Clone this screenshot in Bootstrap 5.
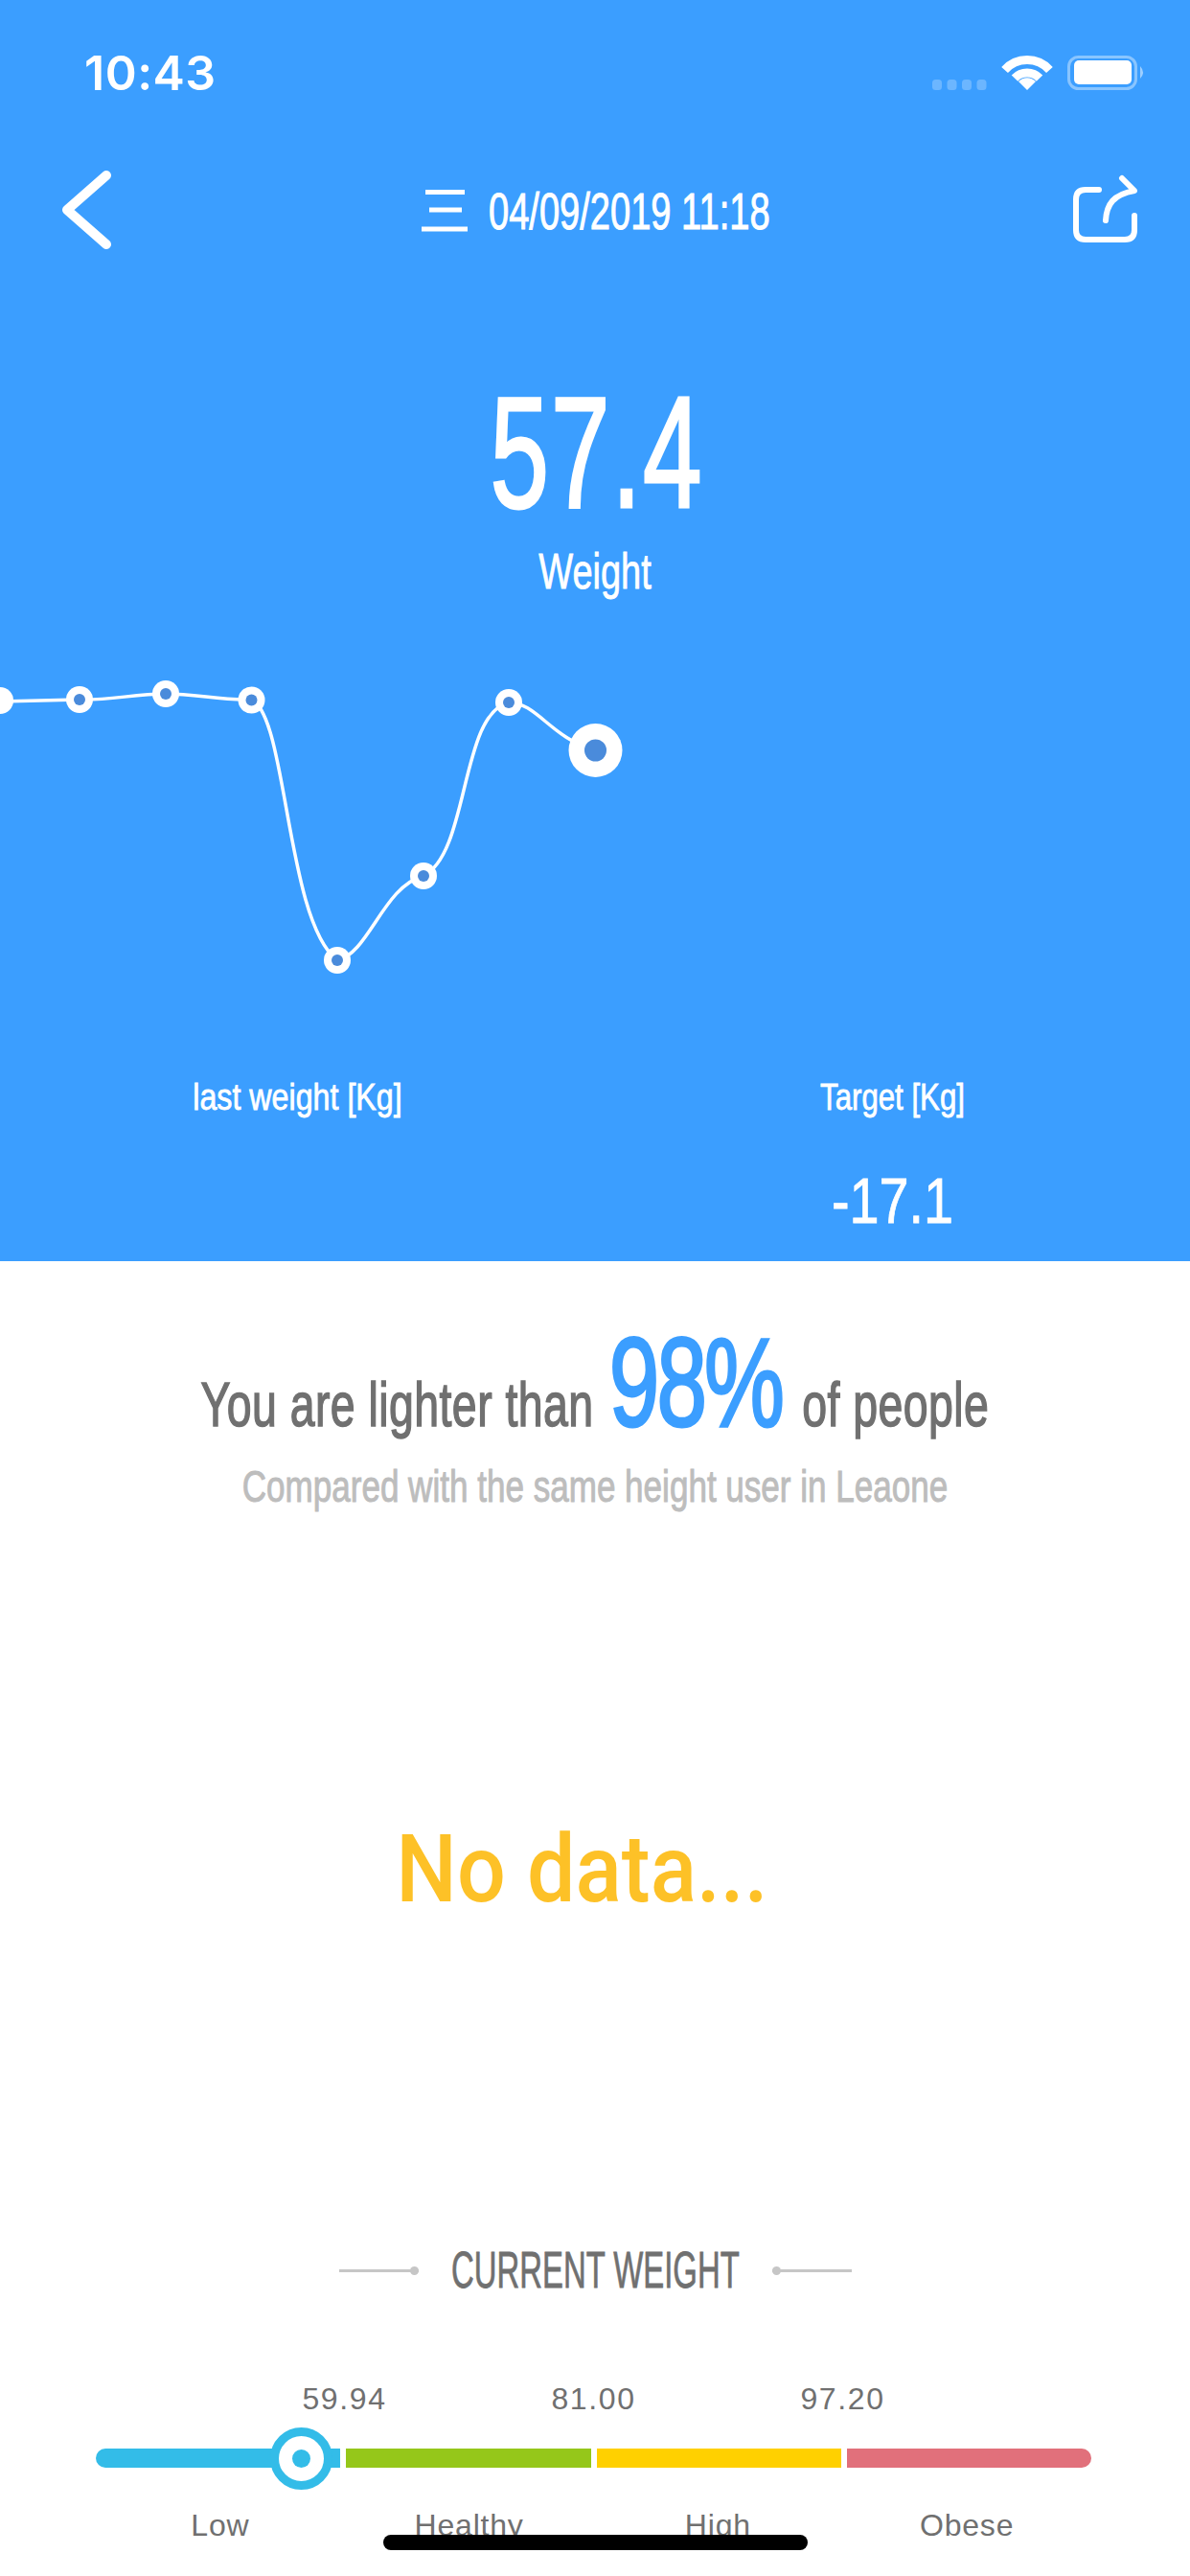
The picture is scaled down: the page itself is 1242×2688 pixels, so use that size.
<!DOCTYPE html>
<html>
<head>
  <meta charset="utf-8">
  <title>Weight</title>
  <link href="https://cdn.jsdelivr.net/npm/bootstrap@5.3.3/dist/css/bootstrap.min.css" rel="stylesheet">
  <style>
    :root { --blue: #3b9eff; --grey: #707070; }
    body { width: 1242px; height: 2688px; overflow: hidden; background: #fff; font-family: "Liberation Sans", sans-serif; }
    .din { display: block; text-align: center; white-space: nowrap; font-family: "Liberation Sans Narrow", "Liberation Sans", sans-serif; }
    .screen { position: relative; width: 1242px; height: 2688px; }
    .top-panel { height: 1316px; background: var(--blue); color: #fff; }
    .status-row { height: 150px; padding: 58px 46px 0 88px; }
    .clock { font-family: Inter, "Liberation Sans", sans-serif; font-size: 50px; font-weight: 600; letter-spacing: .5px; line-height: 36px; }
    .title-row { height: 140px; padding: 0 53px 0 64px; }
    .date-group { gap: 22px; }
    .date-text { width: 292px; font-size: 54px; line-height: 60px; text-align: left; transform: scaleX(.705); transform-origin: left center; -webkit-text-stroke: 1px #fff; }
    .big-num { font-size: 165px; line-height: 150px; margin: 107px 0 0 4px; transform: scaleX(.67); letter-spacing: 3px; -webkit-text-stroke: 3px #fff; }
    .big-cap { font-size: 52px; line-height: 60px; transform: scaleX(.73); margin-top: 19px; -webkit-text-stroke: .8px #fff; }
    .trend { display: block; margin-top: 74px; }
    .sub-cols { margin-top: 90px; }
    .sub-label { font-size: 39px; line-height: 46px; transform: scaleX(.8); -webkit-text-stroke: .8px #fff; }
    .sub-label.wide-label { transform: scaleX(.826); }
    .sub-val { font-size: 66px; line-height: 70px; margin-top: 50px; transform: scaleX(.845); -webkit-text-stroke: .8px #fff; }
    .compare-line { margin-top: 65px; color: var(--grey); font-size: 65px; letter-spacing: .6px; line-height: 124px; transform: scaleX(.715); -webkit-text-stroke: 1.5px var(--grey); }
    .compare-line b { font-weight: 400; font-size: 132px; letter-spacing: -4px; color: var(--blue); margin: 0 11px 0 4px; -webkit-text-stroke: 3px var(--blue); }
    .compare-sub { color: #bdbdbd; font-size: 46px; line-height: 54px; margin-top: -4px; transform: scaleX(.762); -webkit-text-stroke: 1px #bdbdbd; }
    .no-data { color: #fdc127; font-family: Roboto, "Liberation Sans", sans-serif; font-size: 99px; font-weight: 500; line-height: 110px; margin-top: 317px; margin-right: 27px; transform: scaleX(.905); }
    .cur-title { margin-top: 334px; height: 60px; }
    .cur-box { width: 369px; }
    .cur-box span { color: var(--grey); font-size: 53px; line-height: 60px; transform: scaleX(.62); -webkit-text-stroke: .8px var(--grey); }
    .dash { width: 83px; height: 3px; background: #c6c6c6; position: relative; }
    .dash::after { content: ""; position: absolute; top: -3px; width: 9px; height: 9px; border-radius: 50%; background: #c6c6c6; }
    .dash.lft::after { right: 0; }
    .dash.rgt::after { left: 0; }
    .scale-box { position: relative; margin: 84px 103px 0 100px; height: 190px; }
    .scale-vals { height: 40px; color: var(--grey); font-size: 32px; letter-spacing: 1.6px; line-height: 40px; }
    .scale-vals div { width: 260px; text-align: center; }
    .scale-bar { height: 20px; gap: 6px; margin-top: 32px; }
    .scale-bar div { flex: 1 1 0; }
    .seg-a { background: #33bce8; border-radius: 10px 0 0 10px; }
    .seg-b { background: #95c71a; }
    .seg-c { background: #ffd000; }
    .seg-d { background: #e1707b; border-radius: 0 10px 10px 0; }
    .thumb { position: absolute; left: 182px; top: 50px; width: 65px; height: 65px; border-radius: 50%; background: #fff; border: 9px solid #33bce8; }
    .thumb::after { content: ""; position: absolute; left: 14px; top: 14px; width: 19px; height: 19px; border-radius: 50%; background: #33bce8; }
    .scale-names { margin-top: 40px; color: var(--grey); font-size: 32px; line-height: 40px; }
    .scale-names div { flex: 1 1 0; text-align: center; letter-spacing: .8px; }
    .home-bar { position: absolute; left: 400px; top: 2645px; width: 443px; height: 16px; border-radius: 8px; background: #000; }
  </style>
</head>
<body>
  <div class="screen">
    <div class="top-panel">
      <div class="status-row d-flex justify-content-between align-items-start">
        <div class="clock">10:43</div>
        <svg width="223" height="37" viewBox="0 0 223 37">
          <g fill="#fff" fill-opacity=".25">
            <rect x="0" y="25" width="10" height="11" rx="3.500"/><rect x="15.500" y="25" width="10" height="11" rx="3.500"/><rect x="31" y="25" width="10" height="11" rx="3.500"/><rect x="46.500" y="25" width="10" height="11" rx="3.500"/>
          </g>
          <path d="M75.600 15A31.500 31.500 0 0 1 122.400 15M86 23.600A18 18 0 0 1 112 23.600" fill="none" stroke="#fff" stroke-width="9"/>
          <path d="M99 36L90 27A12.500 12.500 0 0 1 108 27Z" fill="#fff"/>
          <rect x="142.500" y="1.500" width="70" height="33" rx="10" fill="none" stroke="#fff" stroke-opacity=".4" stroke-width="3"/>
          <rect x="148" y="5" width="60" height="25" rx="5" fill="#fff"/>
          <path d="M217 11Q223 17.500 217 24Z" fill="#fff" fill-opacity=".5"/>
        </svg>
      </div>
      <div class="title-row d-flex justify-content-between align-items-center">
        <svg width="60" height="90" viewBox="0 0 60 90">
          <path d="M47 8L6 44L47 80" fill="none" stroke="#fff" stroke-width="10" stroke-linecap="round" stroke-linejoin="round"/>
        </svg>
        <div class="date-group d-flex align-items-center">
          <svg width="48" height="44" viewBox="0 0 48 44">
            <path d="M4 2.500H45M8 21H42M0 41H48" stroke="#fff" stroke-width="5"/>
          </svg>
          <div class="date-text din">04/09/2019 11:18</div>
        </div>
        <svg width="72" height="76" viewBox="0 0 72 76">
          <path d="M30 16H16Q6 16 6 26V58Q6 68 16 68H57Q67 68 67 58V43" fill="none" stroke="#fff" stroke-width="6" stroke-linecap="round"/>
          <path d="M37 48C38 31 45 21 67 17L54 4" fill="none" stroke="#fff" stroke-width="6" stroke-linecap="round" stroke-linejoin="round"/>
        </svg>
      </div>
      <div class="big-num din">57.4</div>
      <div class="big-cap din">Weight</div>
      <svg class="trend" width="1242" height="332" viewBox="0 700 1242 332">
        <path d="M0 732L83 730C115 731 140 724 173 724C205 724 230 731 262 730C300 745 298 960 352 1002C385 995 400 925 442 914C490 890 480 745 531 733C560 733 575 770 621 783" fill="none" stroke="#fff" stroke-width="3.500"/>
        <g fill="#fff">
          <circle cx="0" cy="731" r="14"/><circle cx="83" cy="730" r="14"/><circle cx="173" cy="724" r="14"/><circle cx="262.500" cy="730.500" r="14"/>
          <circle cx="352" cy="1002" r="14"/><circle cx="442" cy="914" r="14"/><circle cx="531" cy="733" r="14"/><circle cx="621.500" cy="783" r="28"/>
        </g>
        <g fill="#4a8bdb">
          <circle cx="83" cy="730" r="6"/><circle cx="173" cy="724" r="6"/><circle cx="262.500" cy="730.500" r="6"/>
          <circle cx="352" cy="1002" r="6"/><circle cx="442" cy="914" r="6"/><circle cx="531" cy="733" r="6"/><circle cx="621.500" cy="783" r="11.500"/>
        </g>
      </svg>
      <div class="sub-cols row g-0">
        <div class="col-6"><div class="sub-label wide-label din">last weight [Kg]</div></div>
        <div class="col-6">
          <div class="sub-label din">Target [Kg]</div>
          <div class="sub-val din">-17.1</div>
        </div>
      </div>
    </div>

    <div class="compare-line din">You are lighter than <b>98%</b> of people</div>
    <div class="compare-sub din">Compared with the same height user in Leaone</div>
    <div class="no-data din">No data...</div>

    <div class="cur-title d-flex justify-content-center align-items-center">
      <div class="dash lft"></div>
      <div class="cur-box d-flex justify-content-center"><span class="din">CURRENT WEIGHT</span></div>
      <div class="dash rgt"></div>
    </div>

    <div class="scale-box">
      <div class="scale-vals d-flex justify-content-center">
        <div>59.94</div><div>81.00</div><div>97.20</div>
      </div>
      <div class="scale-bar d-flex">
        <div class="seg-a"></div><div class="seg-b"></div><div class="seg-c"></div><div class="seg-d"></div>
      </div>
      <div class="thumb"></div>
      <div class="scale-names d-flex">
        <div>Low</div><div>Healthy</div><div>High</div><div>Obese</div>
      </div>
    </div>
    <div class="home-bar"></div>
  </div>
  <script src="https://cdn.jsdelivr.net/npm/bootstrap@5.3.3/dist/js/bootstrap.bundle.min.js"></script>
</body>
</html>
